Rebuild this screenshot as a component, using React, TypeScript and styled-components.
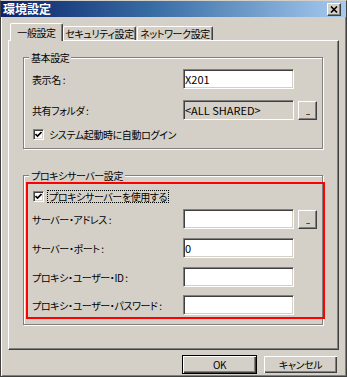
import styled, { createGlobalStyle } from "styled-components";

// Classic Windows dialog colours
const FACE = "#d4d0c8";
const SHADOW = "#808080";
const DARK = "#404040";

const GlobalStyle = createGlobalStyle`
  html, body {
    margin: 0;
    padding: 0;
    background: ${FACE};
  }
  body {
    font-family: "Noto Sans CJK JP", "Noto Sans", sans-serif;
    font-size: 10px;
    letter-spacing: -0.4px;
    color: #000;
    font-feature-settings: "palt";
  }
`;

const Window = styled.div`
  box-sizing: border-box;
  width: 347px;
  height: 377px;
  background: ${FACE};
  border: 1px solid ${DARK};
  border-top-color: ${FACE};
  box-shadow: inset 1px 1px #fff, inset -1px -1px ${SHADOW};
  display: flex;
  flex-direction: column;
`;

const TitleBar = styled.div`
  height: 16px;
  display: flex;
  align-items: center;
  justify-content: space-between;
  padding: 0 5px 0 2px;
  background: linear-gradient(to right, #0a246a, #3a6ea5 45%, #a6caf0);
`;

const TitleText = styled.span`
  color: #fff;
  font-weight: bold;
  font-size: 12px;
  letter-spacing: 0;
  line-height: 16px;
`;

const CloseButton = styled.div`
  box-sizing: border-box;
  width: 14px;
  height: 13px;
  background: ${FACE};
  border-top: 1px solid #fff;
  border-left: 1px solid #fff;
  border-right: 1px solid ${DARK};
  border-bottom: 1px solid ${DARK};
  box-shadow: inset -1px -1px ${SHADOW};
  display: flex;
  align-items: center;
  justify-content: center;
`;

const TabStrip = styled.div`
  display: flex;
  align-items: flex-end;
  height: 17px;
  margin-top: 6px;
  padding-left: 9px;
`;

const Tab = styled.div<{ $active?: boolean; $width: number; $left?: number }>`
  box-sizing: border-box;
  width: ${(p) => p.$width}px;
  height: ${(p) => (p.$active ? 18 : 14)}px;
  margin-left: ${(p) => p.$left ?? 0}px;
  margin-bottom: ${(p) => (p.$active ? -1 : 0)}px;
  position: relative;
  z-index: ${(p) => (p.$active ? 2 : 0)};
  background: ${FACE};
  border-top: 1px solid #fff;
  border-left: 1px solid #fff;
  border-right: 1px solid ${DARK};
  border-radius: 2px 2px 0 0;
  box-shadow: inset -1px 0 ${SHADOW};
  display: flex;
  align-items: ${(p) => (p.$active ? "flex-start" : "center")};
  justify-content: center;
  padding-top: ${(p) => (p.$active ? 2 : 0)}px;
  line-height: 13px;
  white-space: nowrap;
`;

const Panel = styled.div`
  box-sizing: border-box;
  width: 331px;
  height: 310px;
  margin-left: 7px;
  position: relative;
  border-top: 1px solid #fff;
  border-left: 1px solid #fff;
  border-right: 1px solid ${DARK};
  border-bottom: 1px solid ${DARK};
  box-shadow: inset -1px -1px ${SHADOW};
  padding: 0 0 0 14px;
`;

const GroupBox = styled.div<{ $top: number }>`
  box-sizing: border-box;
  width: 300px;
  margin-top: ${(p) => p.$top}px;
  position: relative;
  border: 1px solid ${SHADOW};
  box-shadow: inset 1px 1px #fff, 1px 1px #fff;
`;

const GroupLegend = styled.span`
  position: absolute;
  top: -7px;
  left: 5px;
  padding: 0 2px;
  background: ${FACE};
  line-height: 13px;
`;

const GroupContent = styled.div<{ $pad: string }>`
  padding: ${(p) => p.$pad};
`;

const ProxyHighlight = styled.div`
  box-sizing: border-box;
  width: 299px;
  margin: 6px 0 5px 2px;
  border: 2px solid #ff0000;
  padding: 0 0 2px 4px;
`;

const FormRow = styled.div<{ $top: number }>`
  display: grid;
  grid-template-columns: 147px 111px 19px;
  column-gap: 4px;
  align-items: center;
  height: 20px;
  margin-top: ${(p) => p.$top}px;
`;

const FieldLabel = styled.span`
  line-height: 13px;
  white-space: nowrap;
`;

const TextField = styled.input<{ $disabled?: boolean }>`
  box-sizing: border-box;
  width: 111px;
  height: 20px;
  margin: 0;
  padding: 0 1px;
  font-family: inherit;
  font-size: 11px;
  letter-spacing: 0;
  color: #000;
  background: ${(p) => (p.$disabled ? FACE : "#fff")};
  border-top: 1px solid ${SHADOW};
  border-left: 1px solid ${SHADOW};
  border-right: 1px solid #fff;
  border-bottom: 1px solid #fff;
  box-shadow: inset 1px 1px ${DARK}, inset -1px -1px ${FACE};
  outline: none;
`;

const BrowseButton = styled.div`
  box-sizing: border-box;
  width: 19px;
  height: 19px;
  background: ${FACE};
  border-top: 1px solid #fff;
  border-left: 1px solid #fff;
  border-right: 1px solid ${DARK};
  border-bottom: 1px solid ${DARK};
  box-shadow: inset -1px -1px ${SHADOW};
  display: flex;
  align-items: flex-end;
  justify-content: center;
  padding-bottom: 4px;
  font-size: 8px;
  line-height: 6px;
  letter-spacing: -1px;
`;

const CheckRow = styled.div<{ $top: number }>`
  display: flex;
  align-items: center;
  gap: 3px;
  height: 13px;
  margin-top: ${(p) => p.$top}px;
  padding-left: 1px;
`;

const CheckBox = styled.div`
  box-sizing: border-box;
  width: 11px;
  height: 11px;
  background: #fff;
  border-top: 1px solid ${SHADOW};
  border-left: 1px solid ${SHADOW};
  border-right: 1px solid #fff;
  border-bottom: 1px solid #fff;
  box-shadow: inset 1px 1px ${DARK}, inset -1px -1px ${FACE};
  display: flex;
  align-items: center;
  justify-content: center;
`;

const CheckLabel = styled.span<{ $focused?: boolean }>`
  line-height: 11px;
  padding: 0 1px;
  border: 1px dotted ${(p) => (p.$focused ? "#000" : "transparent")};
  white-space: nowrap;
`;

const ButtonBar = styled.div`
  display: flex;
  justify-content: flex-end;
  gap: 6px;
  margin-top: 5px;
  padding-right: 8px;
`;

const DialogButton = styled.div<{ $default?: boolean }>`
  box-sizing: border-box;
  width: 75px;
  height: 19px;
  background: ${FACE};
  border: 1px solid ${(p) => (p.$default ? "#000" : "transparent")};
  box-shadow: inset 1px 1px #fff, inset -1px -1px ${DARK}, inset -2px -2px ${SHADOW};
  display: flex;
  align-items: center;
  justify-content: center;
  line-height: 13px;
`;

function Check() {
  return (
    <svg width="7" height="7" viewBox="0 0 7 7">
      <path d="M0.5 3 L2.5 5 L6.5 1" fill="none" stroke="#000" strokeWidth="1.6" />
    </svg>
  );
}

export default function App() {
  return (
    <>
      <GlobalStyle />
      <Window>
        <TitleBar>
          <TitleText>環境設定</TitleText>
          <CloseButton>
            <svg width="8" height="7" viewBox="0 0 8 7">
              <path d="M1 0.5 L7 6.5 M7 0.5 L1 6.5" stroke="#000" strokeWidth="1.6" />
            </svg>
          </CloseButton>
        </TitleBar>

        <TabStrip>
          <Tab $active $width={53}>一般設定</Tab>
          <Tab $width={73}>セキュリティ設定</Tab>
          <Tab $width={76} $left={1}>ネットワーク設定</Tab>
        </TabStrip>

        <Panel>
          {/* basic settings */}
          <GroupBox $top={16}>
            <GroupLegend>基本設定</GroupLegend>
            <GroupContent $pad="0 0 7px 8px">
              <FormRow $top={11}>
                <FieldLabel>表示名 :</FieldLabel>
                <TextField readOnly defaultValue="X201" />
              </FormRow>
              <FormRow $top={11}>
                <FieldLabel>共有フォルダ :</FieldLabel>
                <TextField readOnly $disabled defaultValue="<ALL SHARED>" />
                <BrowseButton>...</BrowseButton>
              </FormRow>
              <CheckRow $top={8}>
                <CheckBox><Check /></CheckBox>
                <CheckLabel>システム起動時に自動ログイン</CheckLabel>
              </CheckRow>
            </GroupContent>
          </GroupBox>

          {/* proxy settings */}
          <GroupBox $top={26}>
            <GroupLegend>プロキシサーバー設定</GroupLegend>
            <ProxyHighlight>
              <CheckRow $top={6}>
                <CheckBox><Check /></CheckBox>
                <CheckLabel $focused>プロキシサーバーを使用する</CheckLabel>
              </CheckRow>
              <FormRow $top={6}>
                <FieldLabel>サーバー・アドレス :</FieldLabel>
                <TextField readOnly defaultValue="" />
                <BrowseButton>...</BrowseButton>
              </FormRow>
              <FormRow $top={9}>
                <FieldLabel>サーバー・ポート :</FieldLabel>
                <TextField readOnly defaultValue="0" />
              </FormRow>
              <FormRow $top={9}>
                <FieldLabel>プロキシ・ユーザー・ID :</FieldLabel>
                <TextField readOnly defaultValue="" />
              </FormRow>
              <FormRow $top={8}>
                <FieldLabel>プロキシ・ユーザー・パスワード :</FieldLabel>
                <TextField readOnly type="password" defaultValue="" />
              </FormRow>
            </ProxyHighlight>
          </GroupBox>
        </Panel>

        <ButtonBar>
          <DialogButton $default>OK</DialogButton>
          <DialogButton>キャンセル</DialogButton>
        </ButtonBar>
      </Window>
    </>
  );
}
